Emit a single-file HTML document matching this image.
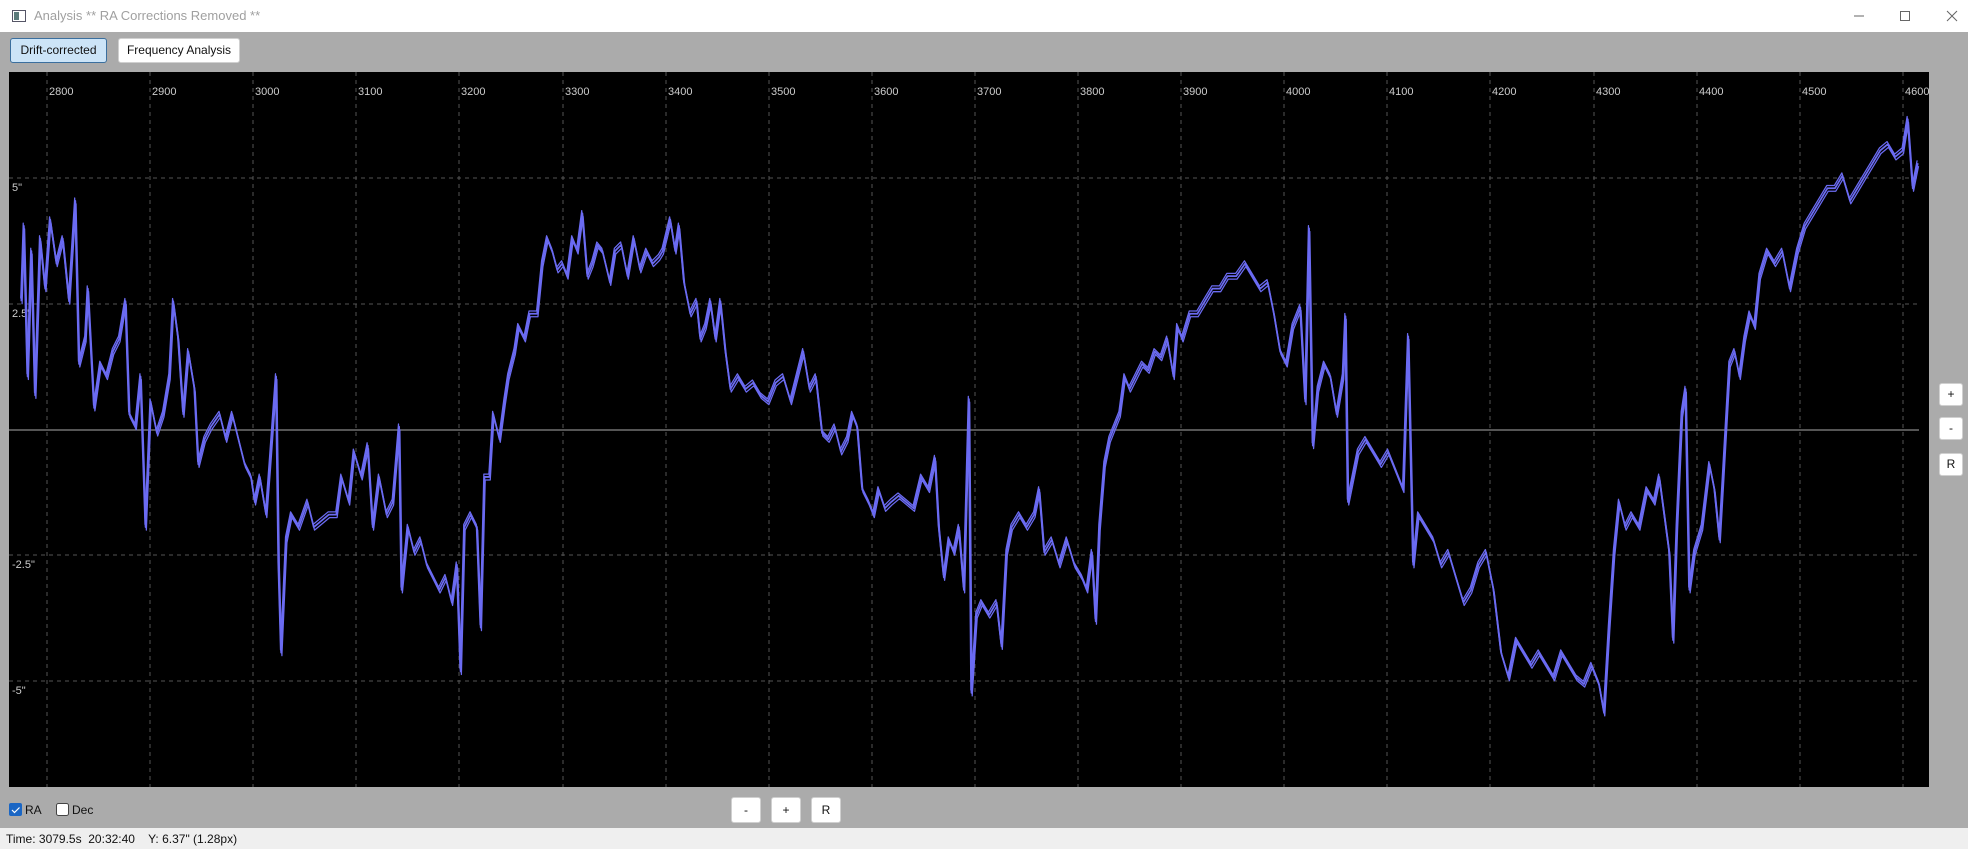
<!DOCTYPE html>
<html><head><meta charset="utf-8"><style>
*{margin:0;padding:0;box-sizing:border-box}
body{width:1968px;height:849px;overflow:hidden;background:#ababab;font-family:"Liberation Sans",sans-serif;position:relative}
.title{position:absolute;left:0;top:0;width:1968px;height:32px;background:#fff;}
.title .t{position:absolute;left:34px;top:8px;font-size:13px;color:#a0a0a0}
.btn{position:absolute;background:#fff;border:1px solid #d0d0d0;border-radius:3px;font-size:12px;color:#111;text-align:center}
.sb{position:absolute;left:0;top:828px;width:1968px;height:21px;background:#efefef;font-size:12px;color:#111;padding:4px 0 0 6px}
</style></head><body>
<div class="title">
<svg style="position:absolute;left:12px;top:10px" width="14" height="12"><rect x="0.5" y="0.5" width="13" height="11" fill="#fff" stroke="#556"/><rect x="2" y="2" width="5" height="8" fill="#5a7a7a"/></svg>
<div class="t">Analysis ** RA Corrections Removed **</div>
<svg style="position:absolute;left:1850px;top:8px" width="110" height="16"><line x1="4" y1="8" x2="14" y2="8" stroke="#666"/><rect x="50.5" y="3.5" width="9" height="9" fill="none" stroke="#666"/><path d="M97 3L107 13M107 3L97 13" stroke="#666"/></svg>
</div>
<div class="btn" style="left:10px;top:38px;width:97px;height:25px;background:#cce4f7;border-color:#3b6f9e;line-height:23px">Drift-corrected</div>
<div class="btn" style="left:118px;top:38px;width:122px;height:25px;line-height:23px">Frequency Analysis</div>
<svg style="position:absolute;left:0;top:0" width="1968" height="849">
<rect x="9" y="72" width="1920" height="715" fill="#000"/>
<g stroke="#555" stroke-dasharray="4,4" stroke-width="1">
<line x1="47" y1="72" x2="47" y2="787"/><line x1="150" y1="72" x2="150" y2="787"/><line x1="253" y1="72" x2="253" y2="787"/><line x1="356" y1="72" x2="356" y2="787"/><line x1="459" y1="72" x2="459" y2="787"/><line x1="563" y1="72" x2="563" y2="787"/><line x1="666" y1="72" x2="666" y2="787"/><line x1="769" y1="72" x2="769" y2="787"/><line x1="872" y1="72" x2="872" y2="787"/><line x1="975" y1="72" x2="975" y2="787"/><line x1="1078" y1="72" x2="1078" y2="787"/><line x1="1181" y1="72" x2="1181" y2="787"/><line x1="1284" y1="72" x2="1284" y2="787"/><line x1="1387" y1="72" x2="1387" y2="787"/><line x1="1490" y1="72" x2="1490" y2="787"/><line x1="1594" y1="72" x2="1594" y2="787"/><line x1="1697" y1="72" x2="1697" y2="787"/><line x1="1800" y1="72" x2="1800" y2="787"/><line x1="1903" y1="72" x2="1903" y2="787"/>
<line x1="9" y1="178" x2="1919" y2="178"/><line x1="9" y1="304" x2="1919" y2="304"/><line x1="9" y1="555" x2="1919" y2="555"/><line x1="9" y1="681" x2="1919" y2="681"/>
</g>
<line x1="9" y1="430" x2="1919" y2="430" stroke="#aaa" stroke-width="1"/>
<g fill="#ccc" font-size="11" font-family="Liberation Sans,sans-serif">
<text x="49" y="95">2800</text><text x="152" y="95">2900</text><text x="255" y="95">3000</text><text x="358" y="95">3100</text><text x="461" y="95">3200</text><text x="565" y="95">3300</text><text x="668" y="95">3400</text><text x="771" y="95">3500</text><text x="874" y="95">3600</text><text x="977" y="95">3700</text><text x="1080" y="95">3800</text><text x="1183" y="95">3900</text><text x="1286" y="95">4000</text><text x="1389" y="95">4100</text><text x="1492" y="95">4200</text><text x="1596" y="95">4300</text><text x="1699" y="95">4400</text><text x="1802" y="95">4500</text><text x="1905" y="95">4600</text>
<text x="12" y="191">5"</text><text x="12" y="317">2.5"</text><text x="12" y="568">-2.5"</text><text x="12" y="694">-5"</text>
</g>
<defs><polyline id="tr" fill="none" stroke-linejoin="round" points="17,240 19,180 22,300 25,200 28,315 32,190 36,230 40,175 45,210 50,190 55,240 60,160 63,290 68,270 70,230 75,325 80,290 85,300 90,280 95,270 100,240 103,330 108,340 112,300 116,420 120,320 125,345 130,330 135,300 138,240 142,270 146,330 150,280 155,310 158,370 163,350 168,340 175,330 180,350 185,330 190,350 195,370 200,380 203,400 207,380 212,410 215,370 220,300 222,450 224,520 228,430 232,410 238,420 245,400 250,420 256,415 262,410 268,410 272,380 278,400 282,360 288,380 293,355 297,420 302,380 308,410 313,400 318,340 320,470 325,420 330,440 335,430 340,450 345,460 350,470 355,460 360,480 364,450 367,535 370,420 375,410 380,420 383,500 386,380 390,380 393,330 398,350 402,320 405,300 410,280 413,260 418,270 422,250 428,250 432,210 436,190 440,200 444,215 448,210 452,220 456,190 460,200 464,170 468,220 472,210 476,195 480,200 486,225 490,200 495,195 500,220 505,190 510,215 515,200 520,210 525,205 528,200 534,175 538,200 541,180 545,225 550,250 555,240 558,270 562,260 566,240 570,270 574,240 578,280 582,310 588,300 594,310 600,305 606,315 612,320 618,305 624,300 630,320 635,300 640,280 645,310 650,300 655,345 660,350 665,340 670,360 675,350 679,330 683,340 687,390 692,400 696,410 700,390 705,405 710,400 716,395 722,400 728,405 734,380 740,390 745,365 748,420 752,460 756,430 760,440 764,420 768,470 772,318 774,552 778,490 782,480 788,490 794,480 798,515 802,440 806,420 812,410 818,420 824,410 828,390 832,440 838,430 844,450 850,430 856,450 862,460 866,470 870,440 873,495 876,420 880,370 884,350 888,340 892,330 896,300 900,310 905,300 910,290 915,295 920,280 925,285 930,270 935,300 938,260 942,270 948,250 954,250 960,240 966,230 972,230 978,220 985,220 992,210 998,220 1004,230 1010,225 1015,250 1020,280 1025,290 1030,260 1036,245 1040,320 1043,182 1046,355 1050,310 1055,290 1060,300 1065,330 1070,300 1072,252 1074,400 1078,380 1082,360 1088,350 1094,360 1100,370 1106,360 1112,375 1118,390 1122,268 1126,450 1130,410 1136,420 1142,430 1148,450 1154,440 1160,460 1166,480 1172,470 1178,450 1184,440 1190,470 1196,520 1202,540 1208,510 1214,520 1220,530 1226,520 1232,530 1238,540 1244,520 1250,530 1256,540 1262,545 1268,530 1274,545 1278,568 1282,500 1286,440 1290,400 1295,420 1300,410 1306,420 1312,390 1318,400 1322,380 1326,410 1330,440 1333,510 1336,420 1340,330 1343,310 1346,470 1350,440 1356,420 1362,370 1366,390 1370,430 1374,360 1378,290 1382,280 1386,300 1390,270 1394,250 1398,260 1402,220 1408,200 1414,210 1420,200 1426,230 1432,200 1438,180 1444,170 1450,160 1456,150 1462,150 1468,140 1474,160 1480,150 1486,140 1492,130 1498,120 1504,115 1510,125 1516,120 1520,95 1524,150 1528,130"/></defs>
<g transform="scale(1.2551)" stroke="#6b6bf2">
<use href="#tr" stroke-width="1.4"/>
<use href="#tr" stroke-width="1" transform="translate(0.6,2.4)"/>
<use href="#tr" stroke-width="1" transform="translate(-0.5,-2.2)"/>
</g>
<rect x="9" y="803" width="13" height="13" rx="2" fill="#1a66c4"/><path d="M12 810l2.5 2.5 5-5" stroke="#fff" fill="none" stroke-width="1.2"/>
<rect x="56.5" y="803.5" width="12" height="12" rx="2" fill="#fff" stroke="#444"/>
<g font-size="12" fill="#111" font-family="Liberation Sans,sans-serif"><text x="25" y="814">RA</text><text x="72" y="814">Dec</text></g>
</svg>
<div class="btn" style="left:1939px;top:383px;width:24px;height:23px;line-height:21px">+</div>
<div class="btn" style="left:1939px;top:417px;width:24px;height:23px;line-height:21px">-</div>
<div class="btn" style="left:1939px;top:453px;width:24px;height:23px;line-height:21px">R</div>
<div class="btn" style="left:731px;top:797px;width:30px;height:26px;line-height:24px">-</div>
<div class="btn" style="left:771px;top:797px;width:30px;height:26px;line-height:24px">+</div>
<div class="btn" style="left:811px;top:797px;width:30px;height:26px;line-height:24px">R</div>
<div class="sb">Time: 3079.5s&nbsp; 20:32:40&nbsp;&nbsp;&nbsp; Y: 6.37" (1.28px)</div>
</body></html>
